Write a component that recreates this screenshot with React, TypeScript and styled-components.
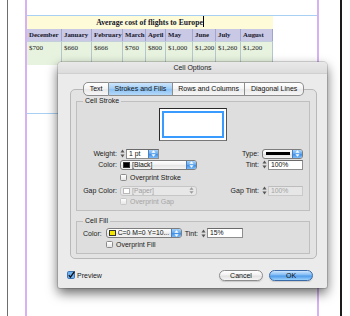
import React from "react";
import styled, { createGlobalStyle } from "styled-components";

const Global = createGlobalStyle`
  *, *::before, *::after { box-sizing: border-box; }
  html, body { margin: 0; padding: 0; background: #fff; }
  body { width: 350px; height: 316px; overflow: hidden; }
`;

const Page = styled.div`
  position: relative;
  width: 350px;
  height: 316px;
  overflow: hidden;
  background: #fff;
  padding-left: 7px;
  display: flex;
`;

const Spread = styled.div`
  width: 335px;
  height: 100%;
  border-left: 1px solid #6e6e6e;
  border-right: 2px solid #1c1c1c;
  padding-left: 17px;
  display: flex;
`;

const Margins = styled.div`
  width: 294px;
  height: 100%;
  border-left: 2px solid #d6b2f2;
  border-right: 2px solid #d6b2f2;
  padding-top: 15px;
  display: flex;
  flex-direction: column;
`;

const Guide = styled.div<{ $gap?: number }>`
  border-top: 1px solid #a9d0f3;
  margin-top: ${(p) => p.$gap ?? 0}px;
`;

const cols = "35px 30px 31px 23px 20px 27px 23px 25px 32px";

const TableGrid = styled.div`
  display: grid;
  grid-template-columns: ${cols};
  width: 246px;
  font-family: "Liberation Serif", "Times New Roman", serif;
  color: #16162a;
`;

const TitleCell = styled.div`
  grid-column: 1 / -1;
  height: 13px;
  background: #fdfbd8;
  text-align: center;
  font-weight: bold;
  font-size: 7.7px;
  line-height: 13px;
  white-space: nowrap;
`;

const Caret = styled.span`
  display: inline-block;
  width: 1px;
  height: 11px;
  background: #000;
  vertical-align: -2px;
`;

const HeadCell = styled.div`
  height: 12px;
  background: #c9c8e5;
  border-right: 1px solid #a1a4cf;
  font-weight: bold;
  font-size: 6.8px;
  line-height: 12px;
  padding-left: 2px;
  white-space: nowrap;
  overflow: hidden;
`;

const DataCell = styled.div`
  height: 24px;
  background: #e7f2df;
  border-right: 1px solid #b5c6cc;
  border-top: 1px solid #c4cfdc;
  font-size: 7px;
  line-height: 10px;
  padding: 1px 0 0 2px;
  white-space: nowrap;
  overflow: hidden;
  color: #222;
`;

/* ---------- Dialog ---------- */

const Dialog = styled.div`
  position: absolute;
  left: 58px;
  top: 62px;
  width: 269px;
  height: 226px;
  background: #ebebeb;
  border-radius: 4px 4px 2px 2px;
  box-shadow: 0 5px 12px rgba(0, 0, 0, 0.6), 0 0 0 1px rgba(0, 0, 0, 0.14);
  display: flex;
  flex-direction: column;
  font-family: "Liberation Sans", Arial, sans-serif;
  font-size: 7px;
  color: #1a1a1a;
`;

const TitleBar = styled.div`
  height: 12px;
  line-height: 11px;
  text-align: center;
  background: linear-gradient(#e9e9e9, #dcdcdc);
  border-bottom: 1px solid #d0d0d0;
  border-radius: 4px 4px 0 0;
  font-size: 7px;
  color: #222;
`;

const Body = styled.div`
  padding: 8px 10px 0 12px;
  display: flex;
  flex-direction: column;
`;

const TabsRow = styled.div`
  position: relative;
  z-index: 1;
  display: flex;
  justify-content: center;
  height: 14px;
`;

const Tab = styled.div<{ $active?: boolean; $first?: boolean; $last?: boolean }>`
  height: 14px;
  line-height: 12px;
  padding: 0 5.5px;
  border: 1px solid #8d8d8d;
  border-left-width: ${(p) => (p.$first ? 1 : 0)}px;
  border-radius: ${(p) =>
    p.$first ? "5px 0 0 5px" : p.$last ? "0 5px 5px 0" : "0"};
  background: ${(p) =>
    p.$active
      ? "linear-gradient(#cfe6fc, #9ccbf6 50%, #8ac0f4 51%, #b4daf9)"
      : "linear-gradient(#ffffff, #f3f3f3 50%, #e9e9e9 51%, #f6f6f6)"};
  white-space: nowrap;
  color: #111;
`;

const Pane = styled.div`
  margin-top: -7px;
  height: 170px;
  border: 1px solid #b8b8b8;
  border-radius: 5px;
  background: #e3e3e3;
  padding: 6px 6px 5px 5px;
  display: flex;
  flex-direction: column;
  gap: 5px;
`;

const Group = styled.fieldset<{ $bottom: number }>`
  margin: 0;
  min-width: 0;
  border: 1px solid #bfbfbf;
  background: #dedede;
  padding: 0 6px ${(p) => p.$bottom}px 6px;
`;

const Legend = styled.legend`
  font-size: 7px;
  line-height: 10px;
  padding: 0 2px;
  margin-left: 0;
  color: #1a1a1a;
`;

const Proxy = styled.div`
  margin: 2px auto 0;
  width: 68px;
  height: 33px;
  background: #fff;
  border: 1px solid #2a2a2a;
  border-right-color: #555;
  border-bottom-color: #777;
  padding: 2px;
`;

const ProxyCell = styled.div`
  width: 100%;
  height: 100%;
  border: 2px solid #3a9bff;
`;

const StrokeGrid = styled.div`
  margin-top: 7px;
  display: grid;
  grid-template-columns: 34px 77px 1fr 41px;
  grid-template-rows: 11px 11px 15px 11px 11px;
  column-gap: 3px;
  align-items: center;
`;

const Label = styled.div`
  text-align: right;
  white-space: nowrap;
  color: #1a1a1a;
`;

const Empty = styled.div``;

const Control = styled.div`
  display: flex;
  align-items: center;
  height: 10px;
`;

const StepperIcon = styled.svg`
  flex: none;
  width: 5px;
  height: 9px;
  margin-right: 1px;
`;

const Field = styled.div<{ $w: number; $disabled?: boolean }>`
  width: ${(p) => p.$w}px;
  height: 10px;
  display: flex;
  align-items: stretch;
  background: ${(p) => (p.$disabled ? "#e6e6e6" : "#fff")};
  border: 1px solid ${(p) => (p.$disabled ? "#c9c9c9" : "#8e8e8e")};
  border-top-color: ${(p) => (p.$disabled ? "#bdbdbd" : "#6a6a6a")};
  color: ${(p) => (p.$disabled ? "#a2a2a2" : "#111")};
  font-size: 6.8px;
  line-height: 8px;
`;

const FieldText = styled.span`
  flex: 1;
  padding-left: 2px;
  white-space: nowrap;
  overflow: hidden;
`;

const Popup = styled.div<{ $w: number; $disabled?: boolean }>`
  width: ${(p) => p.$w}px;
  height: 10px;
  display: flex;
  align-items: center;
  border: 1px solid ${(p) => (p.$disabled ? "#c6c6c6" : "#7d7d7d")};
  border-radius: 3px;
  overflow: hidden;
  background: ${(p) =>
    p.$disabled ? "#e7e7e7" : "linear-gradient(#ffffff, #f0f0f0 50%, #e4e4e4 51%, #f4f4f4)"};
  color: ${(p) => (p.$disabled ? "#a0a0a0" : "#111")};
  font-size: 6.8px;
  line-height: 8px;
`;

const PopupText = styled.span`
  flex: 1;
  white-space: nowrap;
  overflow: hidden;
`;

const Swatch = styled.span<{ $color: string; $disabled?: boolean }>`
  flex: none;
  width: 7px;
  height: 6px;
  margin: 0 2px 0 2px;
  background: ${(p) => p.$color};
  border: 1px solid ${(p) => (p.$disabled ? "#b8b8b8" : "#333")};
`;

const LineSample = styled.span`
  flex: 1;
  height: 3px;
  margin: 0 2px 0 3px;
  background: #000;
`;

const ArrowBox = styled.span<{ $disabled?: boolean }>`
  flex: none;
  width: 10px;
  height: 100%;
  display: flex;
  align-items: center;
  justify-content: center;
  background: ${(p) =>
    p.$disabled ? "transparent" : "linear-gradient(#a8d2fa, #5ea6ee 50%, #3d8de6 51%, #7fbcf6)"};
  border-left: 1px solid ${(p) => (p.$disabled ? "transparent" : "#4b7fbf")};
`;

const CheckRow = styled.div<{ $disabled?: boolean }>`
  display: flex;
  align-items: center;
  gap: 3px;
  white-space: nowrap;
  color: ${(p) => (p.$disabled ? "#a5a5a5" : "#1a1a1a")};
`;

const Box = styled.span<{ $disabled?: boolean }>`
  flex: none;
  width: 7px;
  height: 7px;
  border: 1px solid ${(p) => (p.$disabled ? "#c8c8c8" : "#8a8a8a")};
  border-radius: 1.5px;
  background: linear-gradient(#ffffff, #e6e6e6);
`;

const CheckedBox = styled.svg`
  flex: none;
  width: 8px;
  height: 8px;
`;

const FillRow = styled.div`
  margin-top: 2px;
  display: flex;
  align-items: center;
  height: 10px;
`;

const FillLabel = styled.span<{ $before?: number; $after: number }>`
  white-space: nowrap;
  margin-left: ${(p) => p.$before ?? 0}px;
  margin-right: ${(p) => p.$after}px;
`;

const FillCheck = styled.div`
  margin-top: 1px;
  height: 10px;
  display: flex;
  align-items: center;
  padding-left: 23px;
`;

const Footer = styled.div`
  margin-top: 10px;
  height: 12px;
  display: flex;
  align-items: center;
  padding: 0 14px 0 9px;
`;

const PreviewCheck = styled.div`
  display: flex;
  align-items: center;
  gap: 2px;
  flex: 1;
`;

const Buttons = styled.div`
  display: flex;
  gap: 6px;
`;

const Button = styled.div<{ $primary?: boolean }>`
  width: 44px;
  height: 11px;
  line-height: 9px;
  text-align: center;
  border-radius: 6px;
  font-size: 7px;
  border: 1px solid ${(p) => (p.$primary ? "#3a6aa8" : "#8c8c8c")};
  background: ${(p) =>
    p.$primary
      ? "linear-gradient(#cfe6fd, #7fbaf4 45%, #4f9be9 55%, #9bd0fb)"
      : "linear-gradient(#ffffff, #f2f2f2 45%, #e2e2e2 55%, #f6f6f6)"};
  color: #111;
  box-shadow: 0 1px 1px rgba(0, 0, 0, 0.15);
`;

const Stepper = () => (
  <StepperIcon viewBox="0 0 5 9">
    <path d="M2.5 0.5 L4.5 3.5 H0.5 Z" fill="#555" />
    <path d="M2.5 8.5 L4.5 5.5 H0.5 Z" fill="#555" />
  </StepperIcon>
);

const Arrows = ({ disabled }: { disabled?: boolean }) => (
  <ArrowBox $disabled={disabled}>
    <svg width="5" height="7" viewBox="0 0 5 7">
      <path d="M2.5 0.3 L4.6 2.7 H0.4 Z" fill={disabled ? "#9a9a9a" : "#fff"} />
      <path d="M2.5 6.7 L4.6 4.3 H0.4 Z" fill={disabled ? "#9a9a9a" : "#fff"} />
    </svg>
  </ArrowBox>
);

const months = ["December", "January", "February", "March", "April", "May", "June", "July", "August"];
const prices = ["$700", "$660", "$666", "$760", "$800", "$1,000", "$1,200", "$1,260", "$1,200"];

export default function App() {
  return (
    <>
      <Global />
      <Page>
        <Spread>
          <Margins>
            <Guide />
            <TableGrid>
              <TitleCell>
                Average cost of flights to Europe
                <Caret />
              </TitleCell>
              {months.map((m) => (
                <HeadCell key={m}>{m}</HeadCell>
              ))}
              {prices.map((p, i) => (
                <DataCell key={i}>{p}</DataCell>
              ))}
            </TableGrid>
            <Guide $gap={48} />
          </Margins>
        </Spread>

        <Dialog>
          <TitleBar>Cell Options</TitleBar>
          <Body>
            <TabsRow>
              <Tab $first>Text</Tab>
              <Tab $active>Strokes and Fills</Tab>
              <Tab>Rows and Columns</Tab>
              <Tab $last>Diagonal Lines</Tab>
            </TabsRow>
            <Pane>
              <Group $bottom={3}>
                <Legend>Cell Stroke</Legend>
                <Proxy>
                  <ProxyCell />
                </Proxy>
                <StrokeGrid>
                  <Label>Weight:</Label>
                  <Control>
                    <Stepper />
                    <Field $w={33}>
                      <FieldText>1 pt</FieldText>
                      <Arrows />
                    </Field>
                  </Control>
                  <Label>Type:</Label>
                  <Popup $w={41}>
                    <LineSample />
                    <Arrows />
                  </Popup>

                  <Label>Color:</Label>
                  <Popup $w={77}>
                    <Swatch $color="#000" />
                    <PopupText>[Black]</PopupText>
                    <Arrows />
                  </Popup>
                  <Label>Tint:</Label>
                  <Control>
                    <Stepper />
                    <Field $w={35}>
                      <FieldText>100%</FieldText>
                    </Field>
                  </Control>

                  <Empty />
                  <CheckRow>
                    <Box />
                    Overprint Stroke
                  </CheckRow>
                  <Empty />
                  <Empty />

                  <Label>Gap Color:</Label>
                  <Popup $w={77} $disabled>
                    <Swatch $color="#fff" $disabled />
                    <PopupText>[Paper]</PopupText>
                    <Arrows disabled />
                  </Popup>
                  <Label>Gap Tint:</Label>
                  <Control>
                    <Stepper />
                    <Field $w={35} $disabled>
                      <FieldText>100%</FieldText>
                    </Field>
                  </Control>

                  <Empty />
                  <CheckRow $disabled>
                    <Box $disabled />
                    Overprint Gap
                  </CheckRow>
                  <Empty />
                  <Empty />
                </StrokeGrid>
              </Group>

              <Group $bottom={4}>
                <Legend>Cell Fill</Legend>
                <FillRow>
                  <FillLabel $after={4}>Color:</FillLabel>
                  <Popup $w={76}>
                    <Swatch $color="#f2e600" />
                    <PopupText>C=0 M=0 Y=10...</PopupText>
                    <Arrows />
                  </Popup>
                  <FillLabel $before={3} $after={3}>
                    Tint:
                  </FillLabel>
                  <Control>
                    <Stepper />
                    <Field $w={36}>
                      <FieldText>15%</FieldText>
                    </Field>
                  </Control>
                </FillRow>
                <FillCheck>
                  <CheckRow>
                    <Box />
                    Overprint Fill
                  </CheckRow>
                </FillCheck>
              </Group>
            </Pane>
          </Body>
          <Footer>
            <PreviewCheck>
              <CheckedBox viewBox="0 0 8 8">
                <rect x="0.5" y="0.5" width="7" height="7" rx="1.2" fill="#6fb0f2" stroke="#3f74b6" />
                <path d="M1.8 4.2 L3.4 6.2 L7.6 0.4" fill="none" stroke="#111" strokeWidth="1.3" />
              </CheckedBox>
              Preview
            </PreviewCheck>
            <Buttons>
              <Button>Cancel</Button>
              <Button $primary>OK</Button>
            </Buttons>
          </Footer>
        </Dialog>
      </Page>
    </>
  );
}
